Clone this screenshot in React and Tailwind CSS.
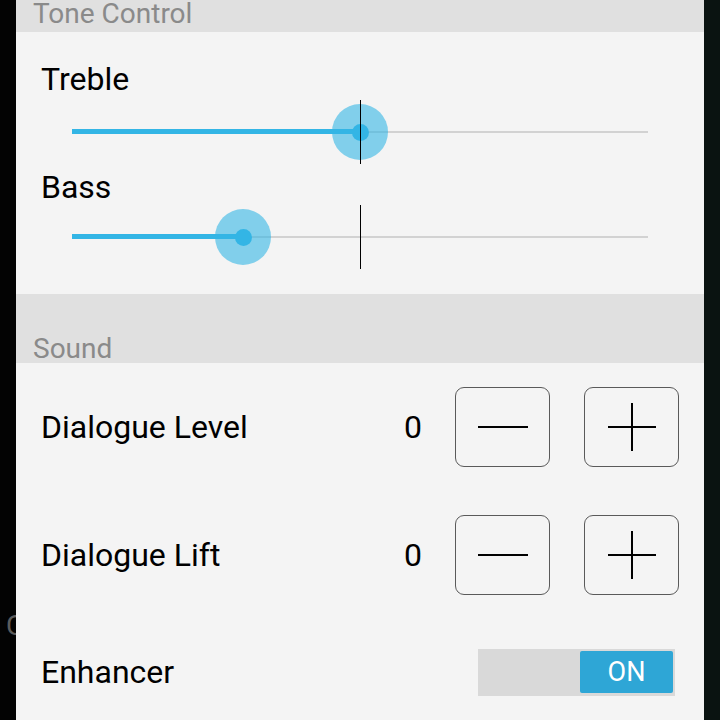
import React from "react";

const font = { fontFamily: "Roboto, 'Noto Sans', sans-serif" };

function Slider({ value }) {
  return (
    <div className="relative mx-[56px] h-[64px]">
      {/* inactive track */}
      <div className="absolute left-0 right-0 top-[31px] h-[2px] bg-[#d2d2d2]" />
      {/* active track */}
      <div
        className="absolute left-0 top-[29px] h-[5px] bg-[#33b5e5]"
        style={{ width: `${value}%` }}
      />
      {/* thumb */}
      <div
        className="absolute top-[4px] -ml-[28px] flex h-[56px] w-[56px] items-center justify-center rounded-full bg-[#33b5e5]/60"
        style={{ left: `${value}%` }}
      >
        <div className="h-[17px] w-[17px] rounded-full bg-[#33b5e5]" />
      </div>
      {/* center marker */}
      <div className="absolute left-1/2 top-0 h-[64px] w-px bg-black" />
    </div>
  );
}

function StepButton({ plus }) {
  return (
    <button className="relative flex h-[80px] w-[95px] items-center justify-center rounded-[9px] border border-[#5a5a5a]">
      {plus ? (
        <span className="relative block h-[48px] w-[48px]">
          <span className="absolute left-0 top-[23px] h-[2px] w-[48px] bg-black" />
          <span className="absolute left-[23px] top-0 h-[48px] w-[2px] bg-black" />
        </span>
      ) : (
        <span className="block h-[2px] w-[50px] bg-black" />
      )}
    </button>
  );
}

function StepRow({ label, value }) {
  return (
    <div className="flex h-[128px] shrink-0 items-center pl-[25px] pr-[25px]">
      <span className="flex-1 text-[32px] leading-none text-black">{label}</span>
      <span className="mr-[33px] text-[32px] leading-none text-black">{value}</span>
      <div className="flex gap-[34px]">
        <StepButton />
        <StepButton plus />
      </div>
    </div>
  );
}

export default function App() {
  return (
    <div className="flex h-[720px] w-[720px] overflow-hidden bg-black" style={font}>
      <div className="relative w-[16px] shrink-0 overflow-hidden bg-[#030303]">
        <span className="absolute left-[6px] top-[612px] text-[28px] leading-none text-[#5c5c5c]">C</span>
      </div>

      <div className="flex w-[688px] shrink-0 flex-col bg-[#f4f4f4]">
        <div className="h-[32px] shrink-0 bg-[#e0e0e0] pl-[17px]">
          <span className="block text-[28px] leading-none text-[#8a8a8a]">Tone Control</span>
        </div>

        <div className="h-[262px] shrink-0">
          <div className="pl-[25px] pt-[31px] text-[32px] leading-none text-black">Treble</div>
          <div className="mt-[5px]">
            <Slider value={50} />
          </div>
          <div className="pl-[25px] pt-[7px] text-[32px] leading-none text-black">Bass</div>
          <div className="mt-[2px]">
            <Slider value={29.7} />
          </div>
        </div>

        <div className="flex h-[69px] shrink-0 items-end bg-[#e0e0e0] pb-0 pl-[17px]">
          <span className="text-[28px] leading-none text-[#8a8a8a]">Sound</span>
        </div>

        <StepRow label="Dialogue Level" value="0" />
        <StepRow label="Dialogue Lift" value="0" />

        <div className="flex h-[106px] shrink-0 items-center pl-[25px] pr-[29px]">
          <span className="flex-1 text-[32px] leading-none text-black">Enhancer</span>
          <div className="flex h-[47px] w-[197px] items-center justify-end bg-[#d9d9d9] pr-[2px]">
            <div className="flex h-[42px] w-[93px] items-center justify-center rounded-[2px] bg-[#2ea6d6] text-[27px] leading-none text-white">
              ON
            </div>
          </div>
        </div>
      </div>

      <div className="w-[16px] shrink-0 bg-[#0a1311]" />
    </div>
  );
}
